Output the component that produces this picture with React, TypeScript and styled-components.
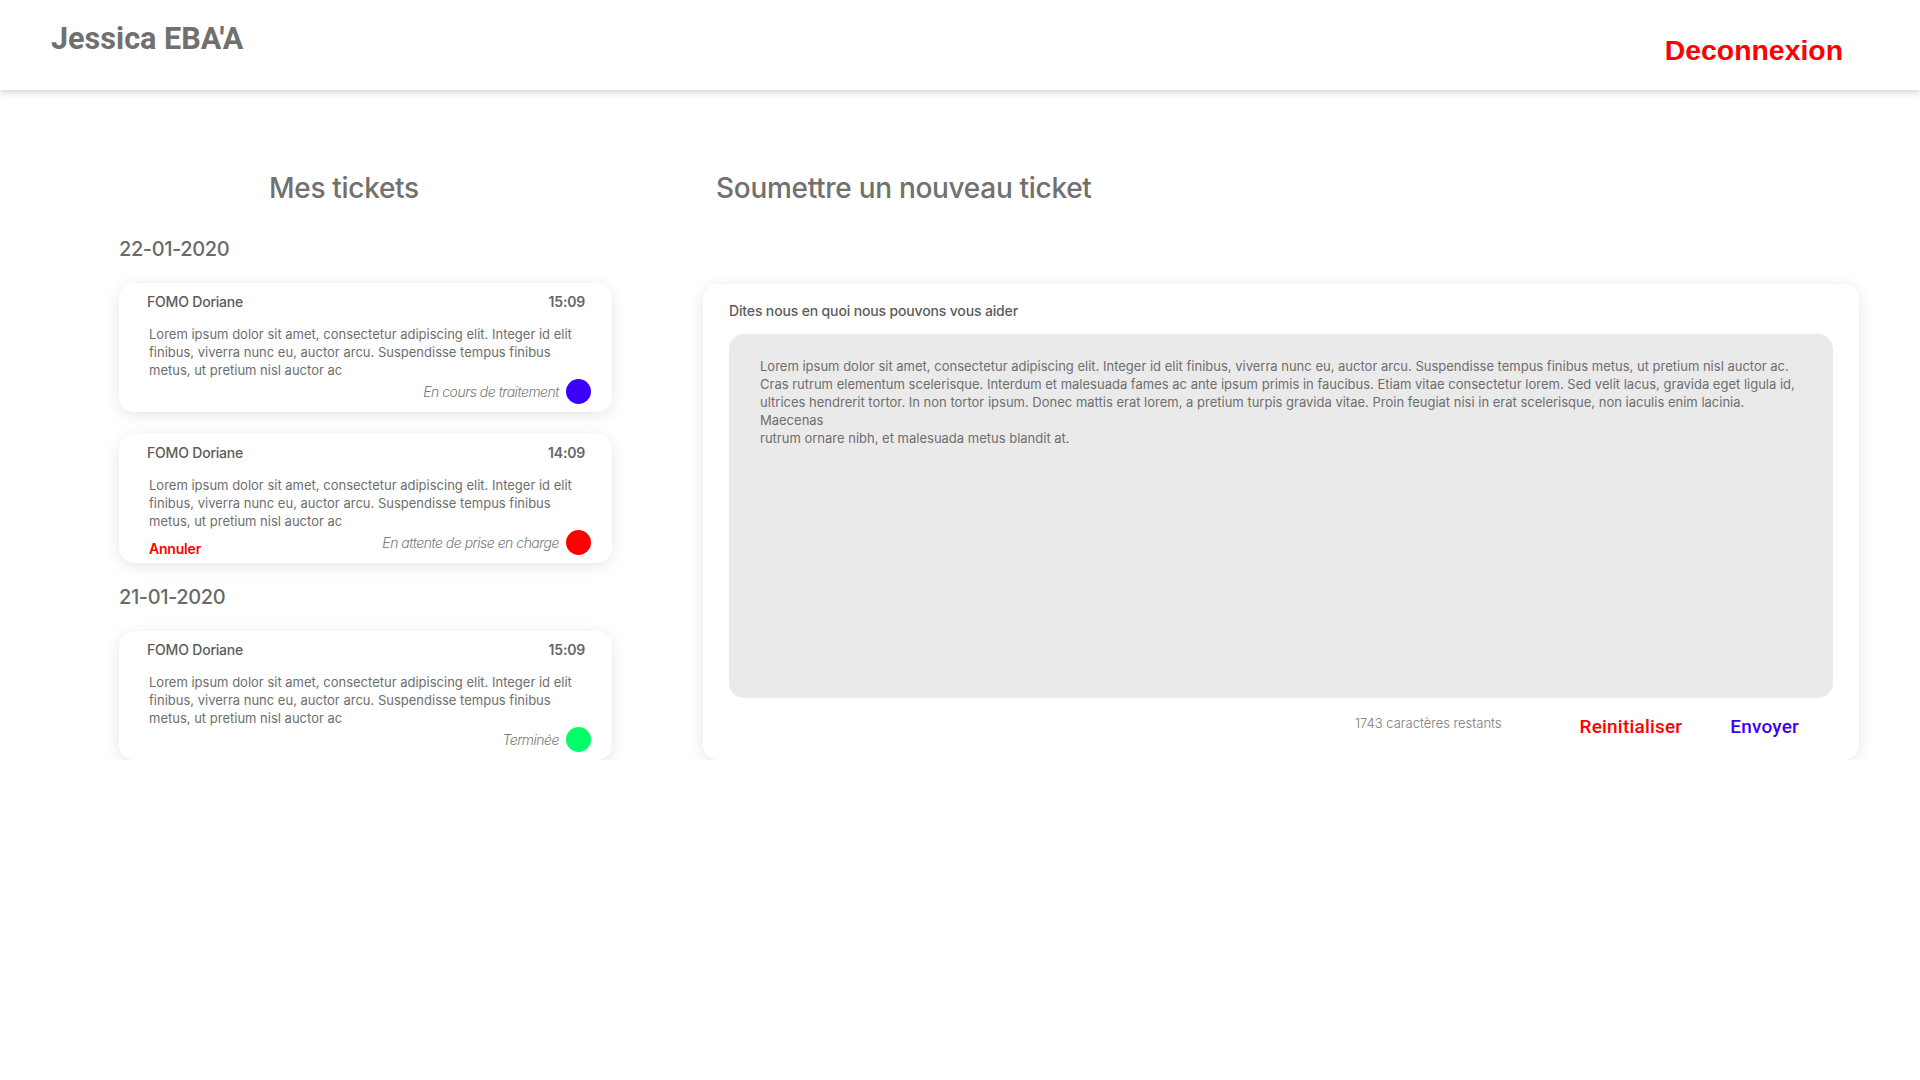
import React from "react";
import styled, { createGlobalStyle } from "styled-components";

const GlobalStyle = createGlobalStyle`
  html, body { margin: 0; padding: 0; background: #ffffff; }
  body { font-family: Inter, "Noto Sans", sans-serif; color: #707070; }
  * { box-sizing: border-box; }
`;

const Header = styled.header`
  height: 90px;
  display: flex;
  justify-content: space-between;
  align-items: flex-start;
  padding: 0 77px 0 51px;
  background: #ffffff;
  box-shadow: 0 3px 6px rgba(0, 0, 0, 0.16);
`;

const UserName = styled.div`
  margin-top: 21px;
  font-family: Roboto, sans-serif;
  font-weight: 700;
  font-size: 30.6px;
  line-height: 36px;
  color: #707070;
`;

const Logout = styled.button`
  margin-top: 33px;
  padding: 0;
  border: none;
  background: none;
  font-family: "Liberation Sans", Arial, sans-serif;
  font-weight: 700;
  font-size: 28.4px;
  line-height: 34px;
  color: #ff0000;
  cursor: pointer;
`;

const Main = styled.main`
  display: flex;
  align-items: flex-start;
  gap: 91px;
  padding: 80px 0 0 119px;
`;

const LeftColumn = styled.section`
  width: 493px;
  display: flex;
  flex-direction: column;
`;

const RightColumn = styled.section`
  width: 1156px;
  display: flex;
  flex-direction: column;
`;

const SectionTitle = styled.h1<{ $indent: number }>`
  margin: 0 0 0 ${(p) => p.$indent}px;
  font-weight: 500;
  font-size: 28px;
  line-height: 36px;
  letter-spacing: -0.3px;
  color: #707070;
`;

const DateLabel = styled.h2`
  margin: 29px 0 20px;
  font-weight: 500;
  font-size: 20px;
  line-height: 28px;
  letter-spacing: -0.4px;
  color: #6a6a6a;
`;

const SecondDate = styled(DateLabel)`
  margin-top: 20px;
`;

const TicketList = styled.div`
  display: flex;
  flex-direction: column;
  gap: 22px;
`;

const Card = styled.article`
  height: 129px;
  padding: 10px 21px 9px 28px;
  background: #ffffff;
  border-radius: 15px;
  box-shadow: 0 3px 15px rgba(0, 0, 0, 0.1);
  display: flex;
  flex-direction: column;
`;

const CardHead = styled.div`
  display: flex;
  justify-content: space-between;
  padding-right: 6px;
  font-size: 14px;
  line-height: 18px;
  font-weight: 500;
  color: #5c5c5c;
  letter-spacing: -0.2px;
`;

const Time = styled.span`
  font-weight: 600;
  color: #666666;
`;

const Body = styled.p`
  margin: 14px 0 0 2px;
  font-size: 13px;
  line-height: 18px;
  color: #6e6e6e;
  white-space: pre-line;
`;

const CardFoot = styled.div<{ $withCancel: boolean }>`
  display: flex;
  align-items: flex-end;
  justify-content: ${(p) => (p.$withCancel ? "space-between" : "flex-end")};
`;

const Cancel = styled.button`
  margin: 0 0 -3px 2px;
  padding: 0;
  border: none;
  background: none;
  font-family: Inter, sans-serif;
  font-size: 14px;
  line-height: 18px;
  font-weight: 600;
  color: #ff0000;
  letter-spacing: -0.2px;
  cursor: pointer;
`;

const Status = styled.div`
  display: flex;
  align-items: center;
  gap: 7px;
  font-size: 14px;
  font-style: italic;
  font-weight: 300;
  letter-spacing: -0.5px;
  color: #7a7a7a;
`;

const Dot = styled.span<{ $color: string }>`
  width: 25px;
  height: 25px;
  border-radius: 50%;
  background: ${(p) => p.$color};
`;

const FormCard = styled.form`
  margin-top: 78px;
  height: 476px;
  padding: 18px 26px 0 26px;
  background: #ffffff;
  border-radius: 15px;
  box-shadow: 0 3px 15px rgba(0, 0, 0, 0.1);
  display: flex;
  flex-direction: column;
`;

const FieldLabel = styled.label`
  font-size: 14px;
  line-height: 18px;
  font-weight: 500;
  letter-spacing: -0.15px;
  color: #5c5c5c;
`;

const TextBox = styled.div`
  margin-top: 14px;
  height: 364px;
  padding: 23px 31px;
  background: #eaeaea;
  border-radius: 15px;
  font-size: 13px;
  line-height: 18px;
  color: #6e6e6e;
  white-space: pre-line;
`;

const FormFoot = styled.div`
  display: flex;
  align-items: center;
  justify-content: flex-end;
  height: 54px;
  padding-right: 34px;
`;

const Counter = styled.span`
  margin-right: 78px;
  margin-top: -5px;
  font-size: 13px;
  font-weight: 300;
  color: #7a7a7a;
`;

const ActionButton = styled.button<{ $color: string }>`
  margin-top: 4px;
  padding: 0;
  border: none;
  background: none;
  font-family: Roboto, sans-serif;
  font-weight: 500;
  font-size: 19px;
  line-height: 22px;
  letter-spacing: 0.2px;
  color: ${(p) => p.$color};
  cursor: pointer;
  & + & { margin-left: 48px; }
`;

const LOREM =
  "Lorem ipsum dolor sit amet, consectetur adipiscing elit. Integer id elit\nfinibus, viverra nunc eu, auctor arcu. Suspendisse tempus finibus\nmetus, ut pretium nisl auctor ac";

const MESSAGE =
  "Lorem ipsum dolor sit amet, consectetur adipiscing elit. Integer id elit finibus, viverra nunc eu, auctor arcu. Suspendisse tempus finibus metus, ut pretium nisl auctor ac.\nCras rutrum elementum scelerisque. Interdum et malesuada fames ac ante ipsum primis in faucibus. Etiam vitae consectetur lorem. Sed velit lacus, gravida eget ligula id,\nultrices hendrerit tortor. In non tortor ipsum. Donec mattis erat lorem, a pretium turpis gravida vitae. Proin feugiat nisi in erat scelerisque, non iaculis enim lacinia.\nMaecenas\nrutrum ornare nibh, et malesuada metus blandit at.";

type Ticket = {
  author: string;
  time: string;
  status: string;
  color: string;
  cancellable?: boolean;
};

const TicketCard = ({ t }: { t: Ticket }) => (
  <Card>
    <CardHead>
      <span>{t.author}</span>
      <Time>{t.time}</Time>
    </CardHead>
    <Body>{LOREM}</Body>
    <CardFoot $withCancel={!!t.cancellable}>
      {t.cancellable && <Cancel type="button">Annuler</Cancel>}
      <Status>
        <span>{t.status}</span>
        <Dot $color={t.color} />
      </Status>
    </CardFoot>
  </Card>
);

export default function App() {
  return (
    <>
      <GlobalStyle />
      <Header>
        <UserName>Jessica EBA'A</UserName>
        <Logout type="button">Deconnexion</Logout>
      </Header>
      <Main>
        <LeftColumn>
          <SectionTitle $indent={150}>Mes tickets</SectionTitle>
          <DateLabel>22-01-2020</DateLabel>
          <TicketList>
            <TicketCard
              t={{ author: "FOMO Doriane", time: "15:09", status: "En cours de traitement", color: "#3c00ff" }}
            />
            <TicketCard
              t={{
                author: "FOMO Doriane",
                time: "14:09",
                status: "En attente de prise en charge",
                color: "#ff0000",
                cancellable: true,
              }}
            />
          </TicketList>
          <SecondDate>21-01-2020</SecondDate>
          <TicketList>
            <TicketCard t={{ author: "FOMO Doriane", time: "15:09", status: "Terminée", color: "#00ff66" }} />
          </TicketList>
        </LeftColumn>
        <RightColumn>
          <SectionTitle $indent={13}>Soumettre un nouveau ticket</SectionTitle>
          <FormCard onSubmit={(e) => e.preventDefault()}>
            <FieldLabel>Dites nous en quoi nous pouvons vous aider</FieldLabel>
            <TextBox>{MESSAGE}</TextBox>
            <FormFoot>
              <Counter>1743 caractères restants</Counter>
              <ActionButton type="button" $color="#ff0000">
                Reinitialiser
              </ActionButton>
              <ActionButton type="submit" $color="#3c00ff">
                Envoyer
              </ActionButton>
            </FormFoot>
          </FormCard>
        </RightColumn>
      </Main>
    </>
  );
}
